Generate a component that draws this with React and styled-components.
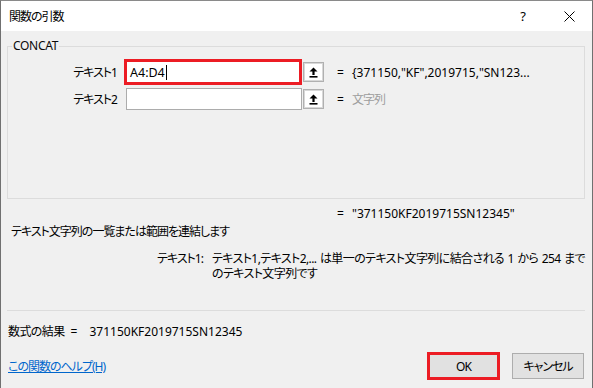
import React from "react";
import styled, { createGlobalStyle, css } from "styled-components";

const GlobalStyle = createGlobalStyle`
  html, body {
    margin: 0;
    padding: 0;
    background: #f0f0f0;
  }
  body {
    font-family: "Noto Sans", "Noto Sans CJK JP", sans-serif;
    font-size: 12px;
    color: #000;
    font-feature-settings: "palt";
  }
`;

// Japanese runs are set tighter to match the Windows UI font
const jpText = css`
  letter-spacing: -1px;
`;

const args = [
  { label: "テキスト1", value: "A4:D4", result: '{371150,"KF",2019715,"SN123...', active: true },
  { label: "テキスト2", value: "", result: "文字列", active: false },
];

const UploadIcon = () => (
  <svg width="9" height="11" viewBox="0 0 9 11">
    <path d="M4.5 0.5 L8.5 4.5 L5.6 4.5 L5.6 8 L3.4 8 L3.4 4.5 L0.5 4.5 Z" fill="#000" />
    <rect x="0.5" y="9" width="8" height="1.6" fill="#000" />
  </svg>
);

const CloseIcon = () => (
  <svg width="11" height="11" viewBox="0 0 11 11">
    <path d="M0.5 0.5 L10.5 10.5 M10.5 0.5 L0.5 10.5" stroke="#000" strokeWidth="1" />
  </svg>
);

export default function App() {
  return (
    <>
      <GlobalStyle />
      <Window>
        <TitleBar>
          <Title>関数の引数</Title>
          <Controls>
            <TitleButton>?</TitleButton>
            <TitleButton>
              <CloseIcon />
            </TitleButton>
          </Controls>
        </TitleBar>
        <Body>
          <GroupBox>
            <Legend>CONCAT</Legend>
            <ArgRows>
              {args.map((a) => (
                <ArgRow key={a.label}>
                  <ArgLabel>{a.label}</ArgLabel>
                  <InputBox highlight={a.active}>
                    {a.value}
                    {a.active && <Caret />}
                  </InputBox>
                  <CollapseButton>
                    <UploadIcon />
                  </CollapseButton>
                  <Equals>=</Equals>
                  <ArgValue muted={!a.active}>{a.result}</ArgValue>
                </ArgRow>
              ))}
            </ArgRows>
          </GroupBox>

          <ResultLine>
            <Equals>=</Equals>
            <ArgValue>"371150KF2019715SN12345"</ArgValue>
          </ResultLine>

          <Description>テキスト文字列の一覧または範囲を連結します</Description>

          <ArgHelp>
            <HelpLabel>テキスト1:</HelpLabel>
            <HelpText>
              <HelpLine>テキスト1,テキスト2,... は単一のテキスト文字列に結合される 1 から 254 まで</HelpLine>
              <HelpLine>のテキスト文字列です</HelpLine>
            </HelpText>
          </ArgHelp>

          <Separator />

          <FormulaResult>
            <FormulaLabel>数式の結果</FormulaLabel>
            <FormulaEquals>=</FormulaEquals>
            <span>371150KF2019715SN12345</span>
          </FormulaResult>

          <Footer>
            <HelpLink href="#">この関数のヘルプ(H)</HelpLink>
            <DialogButton primary>OK</DialogButton>
            <DialogButton>キャンセル</DialogButton>
          </Footer>
        </Body>
      </Window>
    </>
  );
}

const Window = styled.div`
  display: flex;
  flex-direction: column;
  width: 593px;
  height: 388px;
  box-sizing: border-box;
  border-left: 1px solid #707070;
  border-right: 1px solid #707070;
  border-top: 1px solid #8a8a8a;
  background: #f0f0f0;
  overflow: hidden;
`;

const TitleBar = styled.div`
  display: flex;
  align-items: center;
  height: 30px;
  padding-left: 8px;
  background: #fff;
`;

const Title = styled.span`
  ${jpText};
  font-size: 12px;
  color: #000;
`;

const Controls = styled.div`
  display: flex;
  margin-left: auto;
  height: 100%;
`;

const TitleButton = styled.div`
  display: flex;
  align-items: center;
  justify-content: center;
  width: 46px;
  height: 100%;
  font-size: 13px;
`;

const Body = styled.div`
  flex: 1;
  display: flex;
  flex-direction: column;
  padding: 7px 7px 0 6px;
`;

const GroupBox = styled.fieldset`
  margin: 0;
  padding: 0;
  height: 161px;
  box-sizing: border-box;
  min-width: 0;
  border: 1px solid #dcdcdc;
`;

const Legend = styled.legend`
  margin-left: 4px;
  padding: 0 1px;
  line-height: 16px;
  font-size: 12px;
  letter-spacing: -0.3px;
  color: #0a0a0a;
`;

const ArgRows = styled.div`
  display: flex;
  flex-direction: column;
  gap: 5px;
  margin-top: 7px;
`;

const ArgRow = styled.div`
  display: flex;
  align-items: center;
  height: 22px;
`;

const ArgLabel = styled.span`
  ${jpText};
  width: 109px;
  margin-right: 9px;
  text-align: right;
  white-space: nowrap;
`;

const InputBox = styled.div`
  display: flex;
  align-items: center;
  width: ${({ highlight }) => (highlight ? "174px" : "176px")};
  height: 22px;
  box-sizing: border-box;
  padding-left: 3px;
  margin-right: ${({ highlight }) => (highlight ? "2px" : "0")};
  background: #fff;
  border: 1px solid #acacac;
  font-size: 12.5px;
  outline: ${({ highlight }) => (highlight ? "3px solid #ec1c24" : "none")};
  outline-offset: -1px;
`;

const Caret = styled.span`
  display: inline-block;
  width: 1px;
  height: 15px;
  margin-left: 1px;
  background: #000;
`;

const CollapseButton = styled.div`
  display: flex;
  align-items: center;
  justify-content: center;
  width: 21px;
  height: 20px;
  margin-left: 1px;
  box-sizing: border-box;
  border: 1px solid #b0b0b0;
  box-shadow: inset 0 0 0 1px #d8d8d8;
  background: #fff;
`;

const Equals = styled.span`
  margin-left: 13px;
  width: 15px;
`;

const ArgValue = styled.span`
  white-space: nowrap;
  color: ${({ muted }) => (muted ? "#9d9d9d" : "#000")};
  ${({ muted }) => muted && jpText};
`;

const ResultLine = styled.div`
  display: flex;
  align-items: center;
  height: 16px;
  margin-top: 6px;
  padding-left: 317px;
`;

const Description = styled.div`
  ${jpText};
  height: 16px;
  line-height: 16px;
  margin-top: 3px;
  padding-left: 4px;
`;

const ArgHelp = styled.div`
  display: flex;
  margin-top: 11px;
  padding-left: 150px;
  line-height: 15px;
`;

const HelpLabel = styled.span`
  ${jpText};
  width: 57px;
  white-space: nowrap;
`;

const HelpText = styled.div`
  display: flex;
  flex-direction: column;
`;

const HelpLine = styled.span`
  letter-spacing: -0.6px;
  word-spacing: 1px;
  white-space: nowrap;
`;

const Separator = styled.div`
  height: 1px;
  margin-top: 29px;
  background: #dcdcdc;
`;

const FormulaResult = styled.div`
  display: flex;
  align-items: center;
  height: 16px;
  margin-top: 12px;
  padding-left: 1px;
`;

const FormulaLabel = styled.span`
  letter-spacing: -0.6px;
`;

const FormulaEquals = styled.span`
  margin: 0 12px 0 6px;
`;

const Footer = styled.div`
  display: flex;
  align-items: center;
  height: 28px;
  margin-top: 13px;
  padding-left: 1px;
`;

const HelpLink = styled.a`
  ${jpText};
  margin-right: auto;
  color: #0066cc;
  text-decoration: underline;
`;

const DialogButton = styled.div`
  ${jpText};
  display: flex;
  align-items: center;
  justify-content: center;
  box-sizing: border-box;
  width: ${({ primary }) => (primary ? "73px" : "72px")};
  height: ${({ primary }) => (primary ? "28px" : "26px")};
  margin-left: ${({ primary }) => (primary ? "0" : "12px")};
  margin-right: ${({ primary }) => (primary ? "0" : "1px")};
  background: #e1e1e1;
  border: ${({ primary }) => (primary ? "3px solid #ec1c24" : "1px solid #adadad")};
`;
